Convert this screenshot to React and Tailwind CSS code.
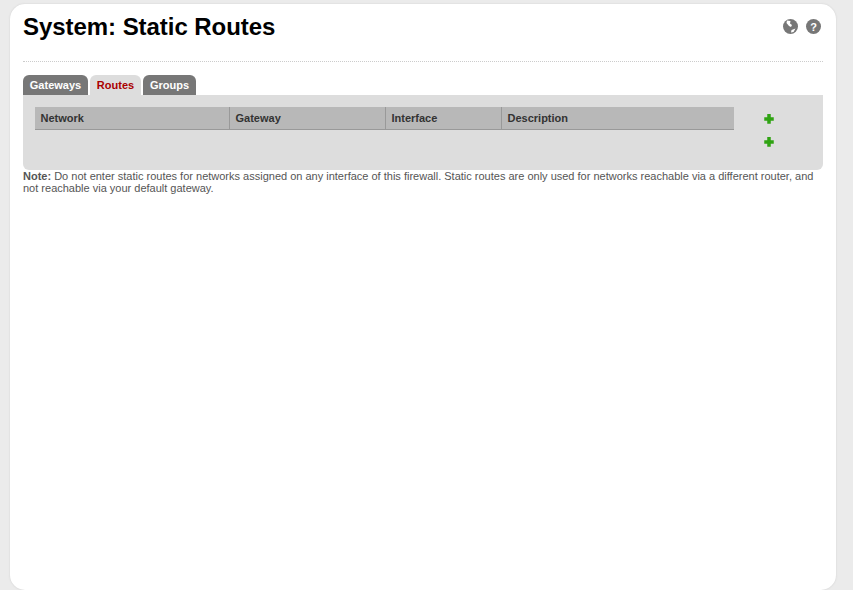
export default function App() {
  const tab = "h-5 rounded-t-[6px] bg-[#777777] text-white text-[11px] font-bold leading-5 text-center";
  const th = "h-full pl-[5.5px] flex items-center border-r border-[#999999] text-[11px] font-bold text-[#333333]";
  const Plus = () => (
    <svg width="10" height="10" viewBox="0 0 10 10"><path d="M3.25 0h3.5v3.25h3v3.5h-3v3h-3.5v-3h-3v-3.5h3z" fill="#2fa312" /></svg>
  );
  return (
    <div className="w-[853px] h-[590px] overflow-hidden bg-[#ebebeb] pt-1 pl-[10px] font-['Liberation_Sans',Arial,sans-serif]">
      <div className="w-[826px] h-[586px] bg-white rounded-[15px] pl-[13px] pr-[13px] shadow-[0_0_2px_#cccccc]">
        <div className="h-[58px] border-b border-dotted border-[#cccccc] flex justify-between items-start pt-[9px]">
          <h1 className="text-[24px] leading-7 font-bold text-black tracking-[-0.05px]">System: Static Routes</h1>
          <div className="flex gap-2 pt-[6px] pr-[2px]">
            <svg width="15" height="15" viewBox="0 0 15 15">
              <circle cx="7.5" cy="7.5" r="7.5" fill="#777777" />
              <path d="M4 1.5l3.5 0.5-0.5 2.5 2 1.5-1 2-2-1-2.5-3zM8.5 11l4-1.5-2 3.5-2.5 0.5z" fill="#ffffff" />
            </svg>
            <svg width="15" height="15" viewBox="0 0 15 15">
              <circle cx="7.5" cy="7.5" r="7.5" fill="#777777" />
              <text x="7.5" y="11.5" textAnchor="middle" fontSize="11" fontWeight="700" fill="#ffffff" fontFamily="Liberation Sans">?</text>
            </svg>
          </div>
        </div>
        <div className="flex gap-[2px] mt-[13px] h-5">
          <div className={`${tab} w-[65px]`}>Gateways</div>
          <div className="h-5 w-[51px] text-center rounded-t-[6px] bg-[#dddddd] text-[#aa0000] text-[11px] font-bold leading-5">Routes</div>
          <div className={`${tab} w-[53px]`}>Groups</div>
        </div>
        <div className="h-[75px] bg-[#dddddd] rounded-b-[6px] pt-3 pl-3 flex">
          <div className="w-[699px] h-[23px] bg-[#b8b8b8] border-b border-[#999999] grid grid-cols-[195px_156px_116px_1fr] items-center">
            <div className={th}>Network</div>
            <div className={th}>Gateway</div>
            <div className={th}>Interface</div>
            <div className="h-full pl-[5.5px] flex items-center text-[11px] font-bold text-[#333333]">Description</div>
          </div>
          <div className="ml-[30px] pt-[7px] flex flex-col gap-[13px]">
            <Plus />
            <Plus />
          </div>
        </div>
        <p className="text-[11px] leading-3 text-[#555555] w-[800px]">
          <b>Note:</b> Do not enter static routes for networks assigned on any interface of this firewall. Static routes are only used for networks reachable via a different router, and not reachable via your default gateway.
        </p>
      </div>
    </div>
  );
}
